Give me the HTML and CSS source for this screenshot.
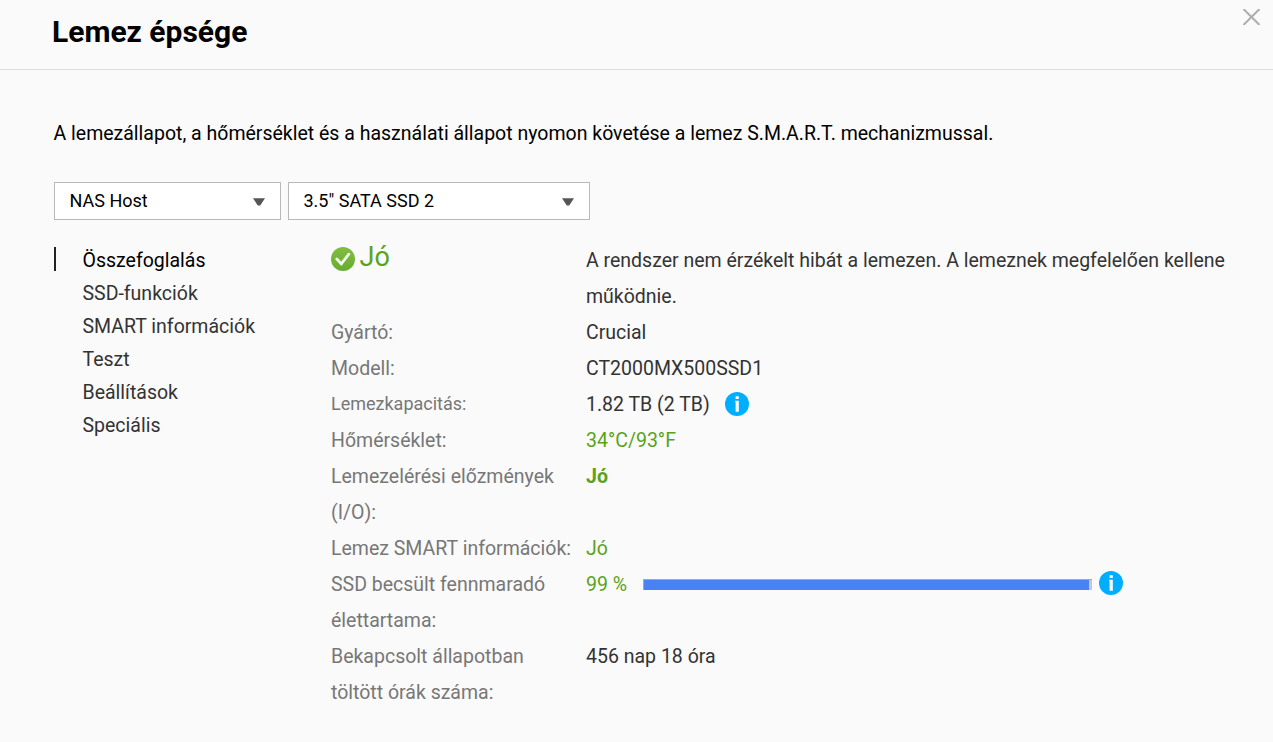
FILE: index.html
```html
<!DOCTYPE html>
<html lang="hu">
<head>
<meta charset="utf-8">
<title>Lemez épsége</title>
<link rel="stylesheet" href="styles.css">
</head>
<body>
<header class="header">
  <h1 class="title">Lemez épsége</h1>
  <svg class="close" viewBox="0 0 17 16"><path d="M.5 0 16.500 16M16.500 0 .5 16"/></svg>
</header>
<main class="content">
  <p class="intro">A lemezállapot, a hőmérséklet és a használati állapot nyomon követése a lemez S.M.A.R.T. mechanizmussal.</p>
  <div class="selects">
    <div class="select select-host"><span>NAS Host</span><svg class="arrow" viewBox="0 0 12 8"><path d="M0 .3h12L7.200 7.500H4.800z"/></svg></div>
    <div class="select select-disk"><span>3.5" SATA SSD 2</span><svg class="arrow" viewBox="0 0 12 8"><path d="M0 .3h12L7.200 7.500H4.800z"/></svg></div>
  </div>
  <div class="columns">
    <nav class="menu">
      <a class="item active">Összefoglalás</a>
      <a class="item">SSD-funkciók</a>
      <a class="item">SMART információk</a>
      <a class="item">Teszt</a>
      <a class="item">Beállítások</a>
      <a class="item">Speciális</a>
    </nav>
    <dl class="details">
      <dt class="status">
        <svg class="check" viewBox="0 0 24 24"><defs><linearGradient id="g" x2="0" y2="1"><stop stop-color="#81bd41"/><stop offset="1" stop-color="#68ac31"/></linearGradient></defs><circle cx="12" cy="12" r="12" fill="url(#g)"/><path d="M5.800 12 10.300 16.800 17.800 7.200"/></svg>
        <span class="status-text">Jó</span>
      </dt>
      <dd>A rendszer nem érzékelt hibát a lemezen. A lemeznek megfelelően kellene működnie.</dd>
      <dt>Gyártó:</dt><dd>Crucial</dd>
      <dt>Modell:</dt><dd>CT2000MX500SSD1</dd>
      <dt class="small">Lemezkapacitás:</dt>
      <dd class="row"><span>1.82 TB (2 TB)</span><svg class="info info-capacity" viewBox="0 0 24 24"><circle cx="12" cy="12" r="12"/><path d="M10.600 4.300h3.200v2.700h-3.200zM10.200 8.800h3.600v10.900h-3.200v-9.700h-.4z"/></svg></dd>
      <dt>Hőmérséklet:</dt><dd class="good">34°C/93°F</dd>
      <dt>Lemezelérési előzmények (I/O):</dt><dd class="good strong">Jó</dd>
      <dt>Lemez SMART információk:</dt><dd class="good">Jó</dd>
      <dt>SSD becsült fennmaradó élettartama:</dt>
      <dd class="row"><span class="good percent">99 %</span><div class="bar"><div class="fill"></div></div><svg class="info info-life" viewBox="0 0 24 24"><circle cx="12" cy="12" r="12"/><path d="M10.600 4.300h3.200v2.700h-3.200zM10.200 8.800h3.600v10.900h-3.200v-9.700h-.4z"/></svg></dd>
      <dt>Bekapcsolt állapotban töltött órák száma:</dt><dd>456 nap 18 óra</dd>
    </dl>
  </div>
</main>
</body>
</html>
```
FILE: styles.css
```css
* { box-sizing: border-box; }
body {
  margin: 0;
  height: 742px;
  overflow: hidden;
  background: #fafafa;
  color: #333;
  font: 19.5px/36px Roboto, sans-serif;
}
svg { flex: none; }
.header {
  display: flex;
  justify-content: space-between;
  height: 70px;
  padding: 9px 13px 0 52px;
  border-bottom: 1px solid #dcdcdc;
}
.title {
  margin: 0;
  color: #000;
  font-size: 30px;
  line-height: 45px;
  font-weight: 700;
}
.close { width: 17px; height: 16px; }
.close path { fill: none; stroke: #adadad; stroke-width: 2; }
.content { padding: 46px 0 0 54px; }
.intro { margin: 0 0 0 -0.5px; color: #000; white-space: nowrap; }
.selects { display: flex; gap: 7px; margin-top: 30px; }
.select {
  display: flex;
  align-items: center;
  justify-content: space-between;
  height: 38px;
  padding: 0 15px 0 14.5px;
  border: 1px solid #b9b9b9;
  background: #fff;
  color: #000;
  font-size: 18px;
}
.select-host { width: 227px; }
.select-disk { width: 302px; }
.arrow { width: 12px; height: 8px; margin-top: 1px; }
.arrow path { fill: #555; }
.columns { display: flex; margin-top: 23px; }
.menu {
  display: flex;
  flex-direction: column;
  width: 277px;
  padding-top: 1px;
}
.item {
  display: flex;
  align-items: center;
  height: 33px;
  padding-left: 28.5px;
}
.item.active { color: #000; }
.item.active::before {
  content: "";
  width: 2px;
  height: 24px;
  margin: -3px 26.5px 0 -28.5px;
  background: #222;
}
.details {
  display: grid;
  grid-template-columns: 255px 660px;
  margin: 0;
}
dt { color: #777; padding-right: 12px; }
dd { margin: 0; }
.small { font-size: 18px; line-height: 34px; }
.good, .status { color: #5aa318; }
.strong { font-weight: 700; }
.status { display: flex; gap: 4.5px; }
.status-text { font-size: 27px; line-height: 28px; }
.check { width: 24px; height: 24px; margin-top: 4px; }
.check path { fill: none; stroke: #f2f9eb; stroke-width: 2.8; stroke-linecap: round; }
.row { display: flex; align-items: center; height: 36px; }
.info { width: 24px; height: 24px; }
.info circle { fill: #00aeff; }
.info path { fill: #fff; }
.info-capacity { margin: -2px 0 0 15px; }
.percent { width: 57px; }
.bar {
  width: 449px;
  height: 11px;
  margin-top: -1px;
  border-top: 1px solid #a9a9a9;
  border-left: 1px solid #a9a9a9;
  background: #c8c8c8;
}
.fill { width: 445px; height: 10px; background: #4982f2; }
.info-life { margin: -4px 0 0 7px; }
```
